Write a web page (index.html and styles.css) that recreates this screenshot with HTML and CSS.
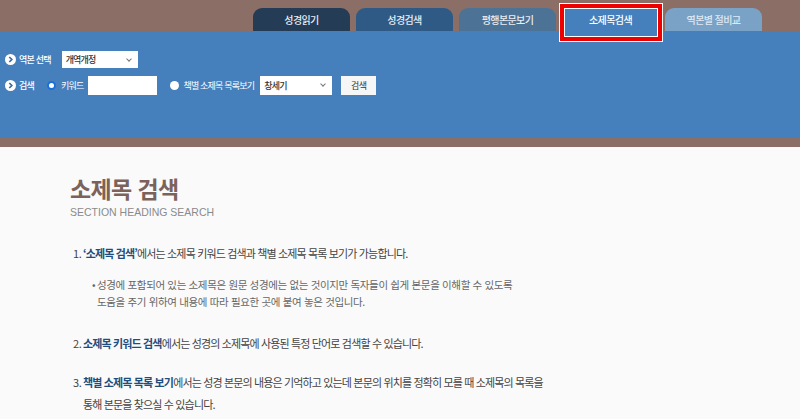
FILE: index.html
```html
<!DOCTYPE html>
<html lang="ko">

<head>
  <meta charset="UTF-8" />
  <meta name="viewport" content="width=device-width, initial-scale=1.0" />
  <title>소제목 검색</title>
  <link rel="stylesheet" href="styles.css">
</head>

<body>
  <div class="top">
    <nav class="tabs">
      <a class="tab t1" href="#">성경읽기</a>
      <a class="tab t2" href="#">성경검색</a>
      <a class="tab t3" href="#">평행본문보기</a>
      <a class="tab t4 on" href="#">소제목검색</a>
      <a class="tab t5" href="#">역본별 절비교</a>
    </nav>
  </div>

  <div class="panel">
    <div class="row">
      <svg class="ico" width="11" height="11" viewBox="0 0 11 11">
        <circle cx="5.5" cy="5.5" r="5.5" fill="#fff" />
        <path d="M4.3 3 L6.8 5.5 L4.3 8" fill="none" stroke="#41689a" stroke-width="1.7" />
      </svg>
      <span class="lbl">역본 선택</span>
      <span class="sel version">개역개정<i class="chev"></i></span>
    </div>
    <div class="row">
      <svg class="ico" width="11" height="11" viewBox="0 0 11 11">
        <circle cx="5.5" cy="5.5" r="5.5" fill="#fff" />
        <path d="M4.3 3 L6.8 5.5 L4.3 8" fill="none" stroke="#41689a" stroke-width="1.7" />
      </svg>
      <span class="lbl">검색</span>
      <span class="radio checked"></span>
      <span class="lbl opt">키워드</span>
      <span class="inp"></span>
      <span class="radio second"></span>
      <span class="lbl opt">책별 소제목 목록보기</span>
      <span class="sel book">창세기<i class="chev"></i></span>
      <span class="btn">검색</span>
    </div>
  </div>
  <div class="band"></div>

  <main class="content">
    <h1 class="title">소제목 검색</h1>
    <p class="sub">SECTION HEADING SEARCH</p>

    <div class="item">
      <span class="num">1.</span>
      <p><b>‘소제목 검색’</b>에서는 소제목 키워드 검색과 책별 소제목 목록 보기가 가능합니다.</p>
    </div>
    <div class="note">
      <span class="dot">•</span>
      <p>성경에 포함되어 있는 소제목은 원문 성경에는 없는 것이지만 독자들이 쉽게 본문을 이해할 수 있도록<br>도움을 주기 위하여 내용에 따라 필요한 곳에 붙여 놓은 것입니다.</p>
    </div>

    <div class="item gap2">
      <span class="num">2.</span>
      <p><b>소제목 키워드 검색</b>에서는 성경의 소제목에 사용된 특정 단어로 검색할 수 있습니다.</p>
    </div>

    <div class="item gap3">
      <span class="num">3.</span>
      <p><b>책별 소제목 목록 보기</b>에서는 성경 본문의 내용은 기억하고 있는데 본문의 위치를 정확히 모를 때 소제목의 목록을<br>통해 본문을 찾으실 수 있습니다.</p>
    </div>
  </main>
</body>

</html>
```

FILE: styles.css
```css
body {
  margin: 0;
  background-color: #fafafa;
  font-family: "Noto Sans CJK KR", "Liberation Sans", sans-serif;
  color: #444;
}

/* Tabs */
.top {
  background-color: #8b6e66;
  padding-top: 8px;
}

.tabs {
  display: flex;
  justify-content: flex-end;
  gap: 6px;
  padding-right: 38px;
}

.tab {
  position: relative;
  width: 97px;
  height: 23px;
  line-height: 23px;
  border-radius: 9px 9px 0 0;
  text-align: center;
  color: #e8eef5;
  font-size: 10px;
  font-weight: 500;
  letter-spacing: -0.6px;
  text-decoration: none;
}

.t1 {
  background-color: #243c55;
}

.t2 {
  background-color: #2e5a85;
}

.t3 {
  background-color: #4c7396;
}

.t4 {
  background-color: #4580bd;
  border-radius: 0;
  color: #fff;
}

.t5 {
  background-color: #7aa2c7;
  color: #dfe9f3;
}

/* red marker round the current tab */
.tab.on:after {
  content: "";
  position: absolute;
  top: -4px;
  left: -2px;
  right: -3px;
  bottom: -10px;
  border: 4px solid #ee0000;
  box-shadow: 0 0 0 1px #fff, inset 0 0 0 1px #fff;
}

/* Search panel */
.panel {
  background-color: #4580bd;
  height: 106px;
  box-sizing: border-box;
  padding: 20px 0 0 5px;
}

.row {
  display: flex;
  align-items: center;
  height: 17px;
  margin-bottom: 8px;
}

.row + .row {
  height: 19px;
}

.ico {
  flex: none;
  margin-right: 3px;
}

.lbl {
  color: #fff;
  font-size: 9px;
  font-weight: 500;
  letter-spacing: -0.8px;
  margin-right: 13px;
}

.row:first-child .lbl {
  margin-right: 11px;
}

.lbl.opt {
  margin-left: 5px;
  margin-right: 5px;
  font-weight: 400;
}

.sel {
  position: relative;
  display: flex;
  align-items: center;
  box-sizing: border-box;
  height: 100%;
  padding-left: 4px;
  background-color: #fff;
  color: #333;
  font-size: 9px;
  font-weight: 500;
  letter-spacing: -0.8px;
}

.version {
  width: 76px;
}

.book {
  width: 72px;
  margin-left: 1px;
}

.chev {
  position: absolute;
  right: 7px;
  top: 6px;
  width: 3px;
  height: 3px;
  border-right: 1px solid #777;
  border-bottom: 1px solid #777;
  transform: rotate(45deg);
}

.radio {
  width: 9px;
  height: 9px;
  border-radius: 50%;
  background-color: #fff;
  box-sizing: border-box;
}

.radio.checked {
  border: 2px solid #1c6fd8;
}

.radio.second {
  margin-left: 13px;
  margin-right: -1px;
}

.inp {
  width: 69px;
  height: 100%;
  background-color: #fff;
}

.btn {
  width: 35px;
  height: 100%;
  margin-left: 9px;
  background-color: #f6f6f6;
  color: #333;
  font-size: 9px;
  letter-spacing: -0.5px;
  text-align: center;
  line-height: 19px;
}

.band {
  height: 10px;
  background-color: #8b6e66;
}

/* Content */
.content {
  padding: 28px 0 0 70px;
}

.title {
  margin: 0;
  font-size: 23px;
  line-height: 26px;
  letter-spacing: -0.6px;
  color: #7b625a;
  font-weight: 700;
}

.sub {
  margin: 4px 0 0;
  font-family: "Liberation Sans", sans-serif;
  font-size: 10.5px;
  line-height: 14px;
  color: #8a8a8a;
}

.item {
  display: flex;
  align-items: baseline;
  margin: 23px 0 0 3px;
  font-size: 11px;
  line-height: 22px;
  letter-spacing: -0.85px;
  color: #444;
}

.item p,
.note p {
  margin: 0;
  white-space: nowrap;
}

.item .num {
  flex: none;
  width: 10px;
  letter-spacing: -0.4px;
}

.item b {
  color: #1f4e7d;
}

.gap2 {
  margin-top: 22px;
}

.gap3 {
  margin-top: 17px;
}

.note {
  display: flex;
  align-items: baseline;
  margin: 12px 0 0 22px;
  font-size: 10.5px;
  line-height: 17px;
  letter-spacing: -0.35px;
  color: #666;
}

.note .dot {
  flex: none;
  width: 5px;
}
```
